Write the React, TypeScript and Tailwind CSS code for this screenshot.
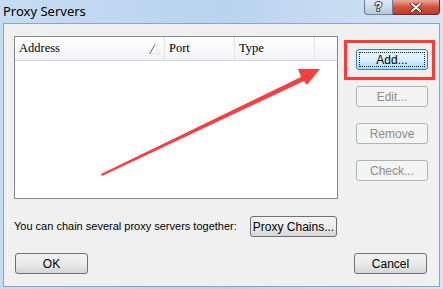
import React from 'react'

const ui = { fontFamily: '"Liberation Sans", Arial, sans-serif' }
const head = { fontFamily: '"Liberation Serif", "DejaVu Serif", serif' }

function Btn({ label, w = 'w-[72px]', disabled = false, focused = false }: { label: string; w?: string; disabled?: boolean; focused?: boolean }) {
  if (disabled) {
    return (
      <div className={`${w} h-[21px] rounded-[3px] border border-[#adb2b5] bg-[#f4f4f4] text-[#8d8d8d] text-[12px] flex items-center justify-center`}>
        {label}
      </div>
    )
  }
  if (focused) {
    return (
      <div className={`${w} h-[21px] rounded-[3px] border border-[#3c7fb1] bg-gradient-to-b from-[#eaf6fd] via-[#d9f0fc] to-[#a7d9f5] p-[2px]`}>
        <div className="w-full h-full border border-dotted border-[#222] flex items-center justify-center text-[12px] text-black">
          {label}
        </div>
      </div>
    )
  }
  return (
    <div className={`${w} h-[21px] rounded-[3px] border border-[#707070] bg-gradient-to-b from-[#f2f2f2] via-[#ebebeb] to-[#d6d6d6] text-[12px] text-black flex items-center justify-center`}>
      {label}
    </div>
  )
}

export default function App() {
  return (
    <div className="w-[443px] h-[289px] flex flex-col bg-gradient-to-r from-[#c6dcf2] via-[#b9d3ee] to-[#d3e4f5] overflow-hidden" style={ui}>
      {/* title bar */}
      <div className="h-[23px] flex items-start justify-between shrink-0">
        <div className="pl-[3px] pt-[3px] text-[13px] text-black leading-[16px]" style={{ fontFamily: '"Noto Sans", sans-serif' }}>Proxy Servers</div>
        <div className="flex mr-[3px]">
          <div className="w-[29px] h-[15px] rounded-bl-[4px] border border-t-0 border-[#6d7f96] bg-gradient-to-b from-[#dfe9f4] to-[#b7c9dc] flex items-center justify-center">
            <span className="text-[12px] font-bold text-white leading-[12px] [-webkit-text-stroke:2px_#3b4656] [paint-order:stroke_fill]">?</span>
          </div>
          <div className="w-[47px] h-[15px] rounded-br-[4px] border border-t-0 border-l-0 border-[#6d2a22] bg-gradient-to-b from-[#e9a89c] via-[#d0523f] to-[#c23a26] flex items-center justify-center">
            <svg width="12" height="9" viewBox="0 0 12 9">
              <path d="M2 1 L10 8 M10 1 L2 8" stroke="#3a1a14" strokeWidth="3.4" strokeLinecap="round" />
              <path d="M2 1 L10 8 M10 1 L2 8" stroke="#fff" strokeWidth="2" strokeLinecap="round" />
            </svg>
          </div>
        </div>
      </div>

      {/* client area */}
      <div className="relative mx-[3px] mb-[2px] flex-1 bg-[#f0f0f0] border border-[#8fa5bf] flex flex-col pl-[10px] pt-[12px]">
        <div className="flex">
          <div className="w-[324px] h-[163px] bg-white border border-[#828790] flex flex-col">
            <div className="h-[24px] flex border-b border-[#d5d5d5] bg-gradient-to-b from-white to-[#f1f2f4] text-[12.5px] text-black" style={head}>
              <div className="w-[150px] border-r border-[#e3e5e8] pl-[4px] flex items-center justify-between pr-[3px]">
                <span>Address</span>
                <svg width="13" height="12" viewBox="0 0 13 12"><path d="M7 1 L12 11 L1 11" stroke="#dde0e3" fill="none" strokeWidth="0.8" /><path d="M1.5 11 L7 1.5" stroke="#555" strokeWidth="0.9" /></svg>
              </div>
              <div className="w-[70px] border-r border-[#e3e5e8] pl-[4px] flex items-center">Port</div>
              <div className="w-[80px] border-r border-[#e3e5e8] pl-[4px] flex items-center">Type</div>
              <div className="flex-1" />
            </div>
            <div className="flex-1" />
          </div>
          <div className="ml-[18px] mt-[13px] flex flex-col gap-[16px]">
            <Btn label="Add..." focused />
            <Btn label="Edit..." disabled />
            <Btn label="Remove" disabled />
            <Btn label="Check..." disabled />
          </div>
        </div>

        <div className="mt-[17px] flex items-center">
          <span className="text-[11px] text-black w-[236px] whitespace-nowrap">You can chain several proxy servers together:</span>
          <Btn label="Proxy Chains..." w="w-[87px]" />
        </div>

        <div className="mt-[16px] flex justify-between pr-[12px] pl-[1px]">
          <Btn label="OK" w="w-[73px]" />
          <Btn label="Cancel" w="w-[73px]" />
        </div>

        {/* annotation */}
        <div className="absolute left-[340px] top-[16px] w-[91px] h-[40px] border-[3px] border-[#ff3a3a]" />
        <svg className="absolute left-0 top-0 pointer-events-none" width="437" height="264" viewBox="0 0 437 264">
          <polygon points="97,150 297,53 294,45 316,45 303,61 300,57 98,152" fill="#f44040" />
        </svg>
      </div>
    </div>
  )
}
